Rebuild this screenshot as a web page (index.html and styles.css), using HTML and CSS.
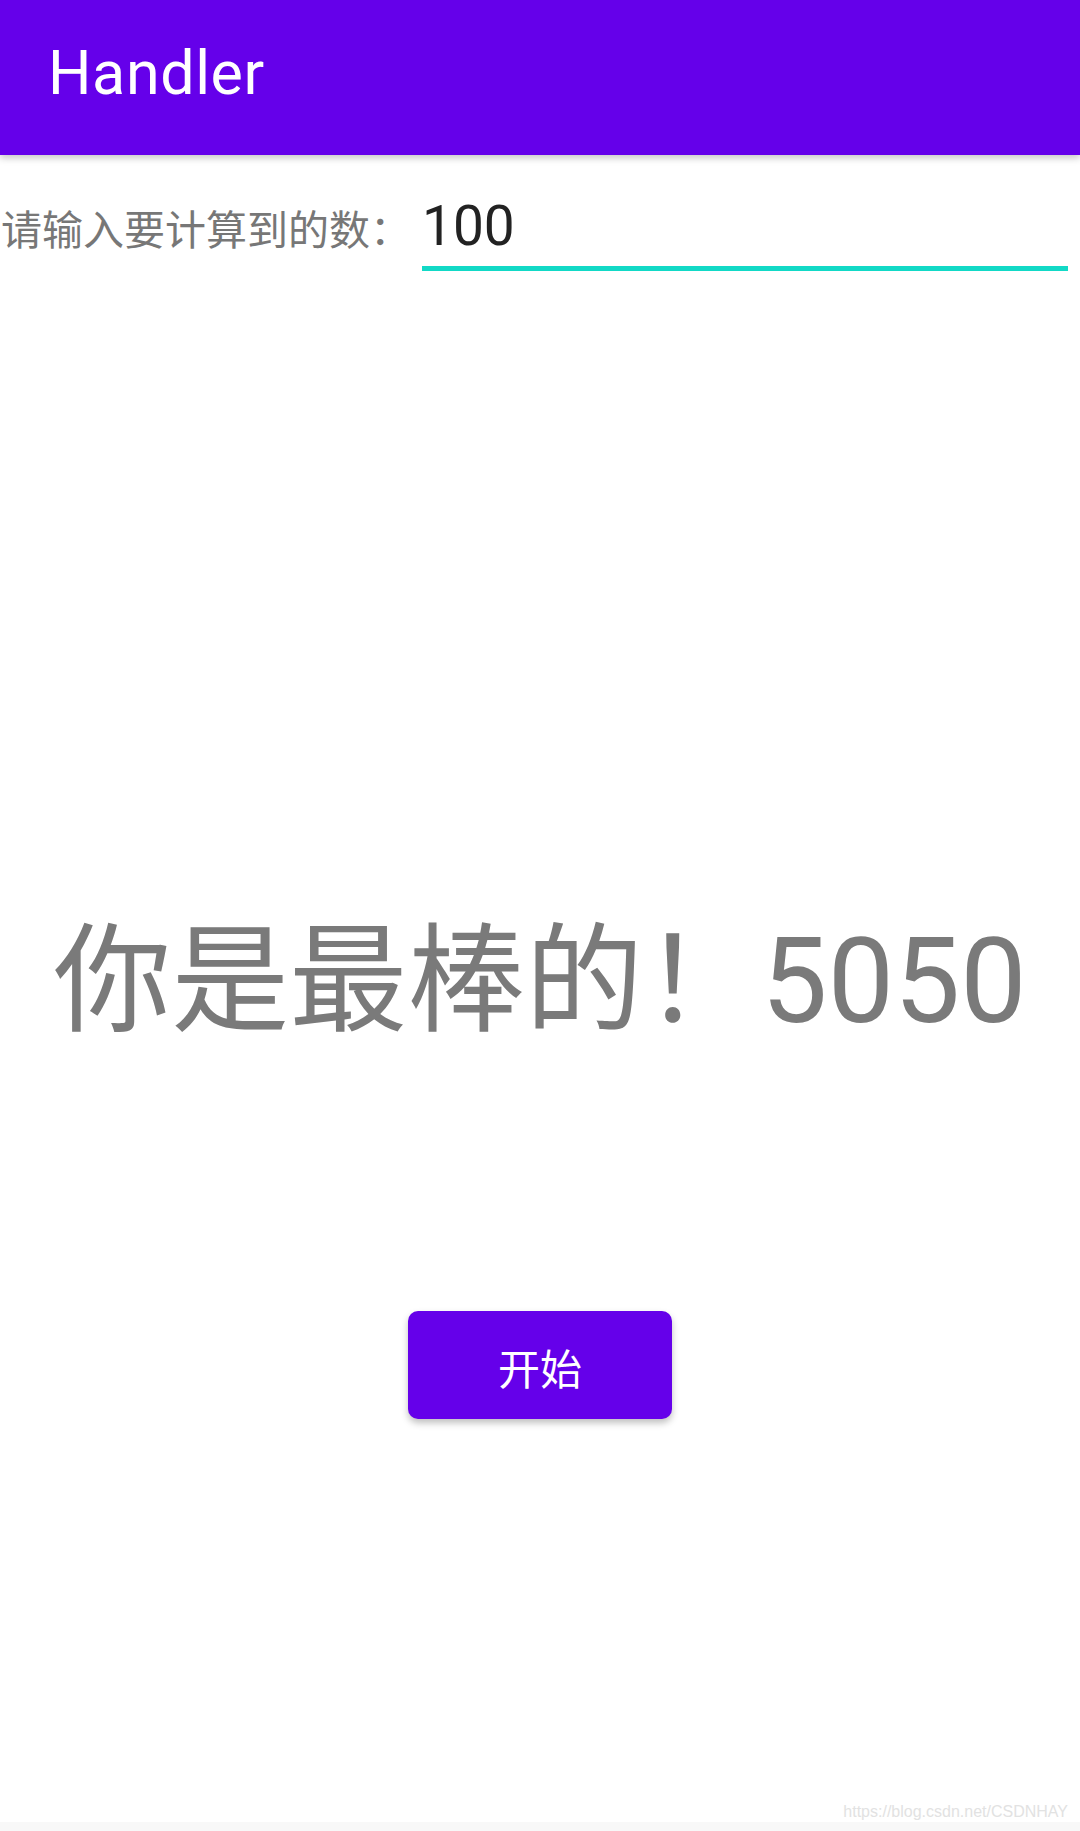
FILE: index.html
```html
<!DOCTYPE html>
<html lang="zh-CN">
<head>
<meta charset="utf-8">
<title>Handler</title>
<link rel="stylesheet" href="styles.css">
</head>
<body>
<div class="page">
  <header class="app-bar">
    <h1 class="app-title">Handler</h1>
  </header>
  <div class="form-row">
    <span class="form-label">请输入要计算到的数：</span>
    <div class="field"><span class="field-value">100</span></div>
  </div>
  <p class="result">你是最棒的！5050</p>
  <div class="actions">
    <button class="start-btn" type="button">开始</button>
  </div>
  <footer class="watermark">https://blog.csdn.net/CSDNHAY</footer>
</div>
</body>
</html>
```
FILE: styles.css
```css
html, body {
  margin: 0;
  padding: 0;
  background: #ffffff;
}

.page {
  width: 1080px;
  height: 1831px;
  display: flex;
  flex-direction: column;
  font-family: Roboto, "Noto Sans CJK SC", sans-serif;
  overflow: hidden;
}

.app-bar {
  flex: 0 0 auto;
  height: 155px;
  box-sizing: border-box;
  padding: 43px 0 0 48px;
  background: #6500ea;
  box-shadow: 0 3px 7px rgba(0, 0, 0, 0.22);
  position: relative;
  z-index: 1;
}

.app-title {
  margin: 0;
  font-size: 61px;
  line-height: 61px;
  font-weight: 400;
  letter-spacing: 0.6px;
  color: #ffffff;
}

.form-row {
  display: flex;
  align-items: baseline;
  padding-left: 1px;
}

.form-label {
  font-size: 41px;
  line-height: 41px;
  color: #777777;
  white-space: nowrap;
}

.field {
  flex: 0 0 646px;
  margin-left: auto;
  margin-right: 12px;
  padding: 43px 0 12px 0;
  border-bottom: 5px solid #12d9c6;
}

.field-value {
  font-size: 55px;
  line-height: 56px;
  color: #222222;
}

.result {
  margin: 652px 0 0 0;
  text-align: center;
  font-size: 118px;
  line-height: 118px;
  color: #7a7a7a;
  white-space: nowrap;
}

.actions {
  display: flex;
  justify-content: center;
  margin-top: 270px;
}

.start-btn {
  width: 264px;
  height: 108px;
  box-sizing: border-box;
  padding: 12px 0 0 0;
  border: none;
  border-radius: 10px;
  background: #6500ea;
  color: #ffffff;
  font-family: Roboto, "Noto Sans CJK SC", sans-serif;
  font-size: 42px;
  line-height: 96px;
  letter-spacing: 0;
  box-shadow: 0 4px 7px rgba(0, 0, 0, 0.25);
  display: block;
}

.watermark {
  margin-top: auto;
  padding: 0 12px 10px 0;
  text-align: right;
  font-family: "Liberation Sans", Arial, sans-serif;
  font-size: 16px;
  line-height: 18px;
  color: #e2e2e2;
  background: linear-gradient(to bottom, #ffffff 0, #ffffff 19px, #f8f8f8 19px);
}
```
